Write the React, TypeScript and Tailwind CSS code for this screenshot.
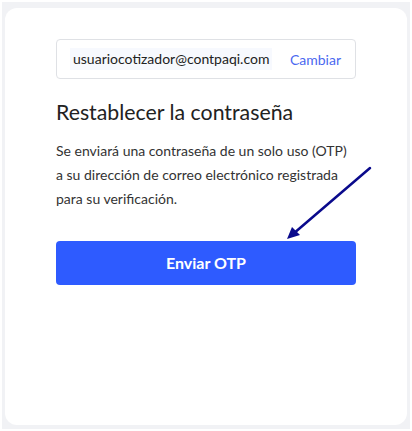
import React from "react";

export default function App() {
  return (
    <div className="w-[412px] h-[431px] bg-white p-[2px] pb-[2px]" style={{ fontFamily: "Lato, 'Noto Sans', sans-serif" }}>
      <div className="w-[408px] h-[427px] bg-[#f1f2f5] pt-[6px] pl-[3px]">
        <div className="relative w-[402px] h-[417px] bg-white rounded-[12px] pt-[31px] pl-[51px]">
          <div className="w-[300px] h-[40px] border border-[#dfe1e5] rounded-[4px] flex items-center pl-[13px] pr-[14px] justify-between">
            <span className="bg-[#f7f9fe] px-[3px] py-[2px] text-[14px] text-[#222] leading-[18px]">usuariocotizador@contpaqi.com</span>
            <span className="text-[14px] text-[#4b68f0]">Cambiar</span>
          </div>
          <h1 className="mt-[19px] text-[21.3px] leading-[28px] text-[#222] font-normal">Restablecer la contraseña</h1>
          <p className="mt-[13px] text-[14px] leading-[24px] text-[#333] w-[296px]">
            Se enviará una contraseña de un solo uso (OTP) a su dirección de correo electrónico registrada para su verificación.
          </p>
          <button className="mt-[30px] w-[300px] h-[44px] bg-[#2e5bff] rounded-[4px] text-white text-[16px] font-bold">Enviar OTP</button>
          <svg className="absolute left-0 top-0" width="402" height="417" viewBox="0 0 402 417">
            <line x1="365" y1="160" x2="288" y2="226" stroke="#0a0a8c" strokeWidth="2.5" strokeLinecap="round" />
            <polygon points="282,231 287,219 295,227" fill="#0a0a8c" />
          </svg>
        </div>
      </div>
    </div>
  );
}
